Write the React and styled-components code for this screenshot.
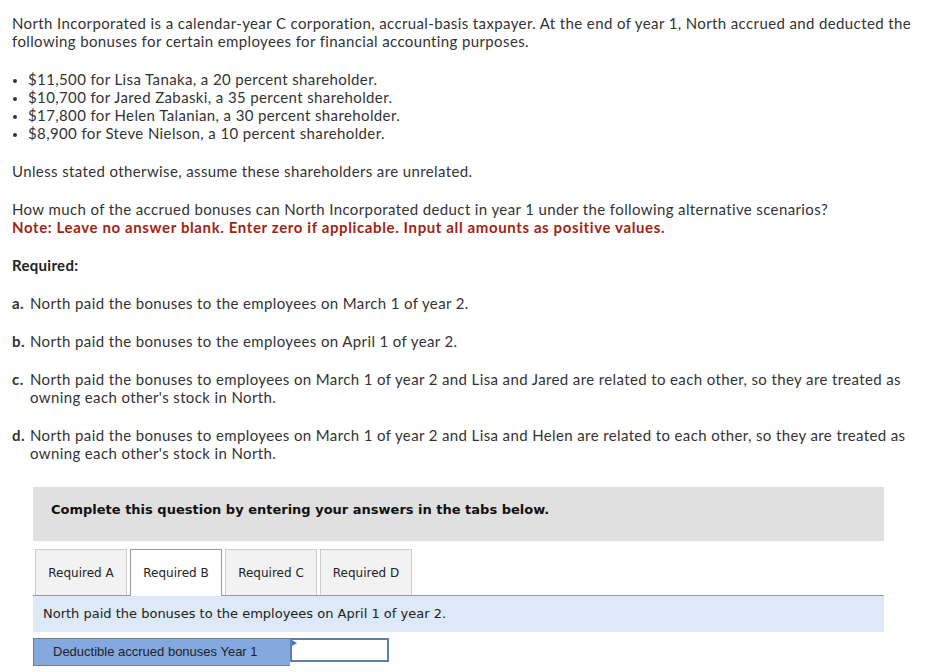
import styled, { createGlobalStyle } from 'styled-components'

const GlobalStyle = createGlobalStyle`
  body {
    margin: 0;
    background: #fff;
    color: #333;
    font-family: Lato, "Open Sans", sans-serif;
  }
`

const bonuses = [
  '$11,500 for Lisa Tanaka, a 20 percent shareholder.',
  '$10,700 for Jared Zabaski, a 35 percent shareholder.',
  '$17,800 for Helen Talanian, a 30 percent shareholder.',
  '$8,900 for Steve Nielson, a 10 percent shareholder.',
]

const parts = [
  { key: 'a', text: 'North paid the bonuses to the employees on March 1 of year 2.' },
  { key: 'b', text: 'North paid the bonuses to the employees on April 1 of year 2.' },
  { key: 'c', text: "North paid the bonuses to employees on March 1 of year 2 and Lisa and Jared are related to each other, so they are treated as owning each other's stock in North." },
  { key: 'd', text: "North paid the bonuses to employees on March 1 of year 2 and Lisa and Helen are related to each other, so they are treated as owning each other's stock in North." },
]

const tabs = ['Required A', 'Required B', 'Required C', 'Required D']

const App = () => {
  const active = 1
  return (
    <>
      <GlobalStyle />
      <Page>
        <Para>
          North Incorporated is a calendar-year C corporation, accrual-basis taxpayer. At the end of year 1, North accrued and deducted the following bonuses for certain employees for financial accounting purposes.
        </Para>
        <Bullets>
          {bonuses.map(b => <li key={b}>{b}</li>)}
        </Bullets>
        <Para>Unless stated otherwise, assume these shareholders are unrelated.</Para>
        <Para>
          How much of the accrued bonuses can North Incorporated deduct in year 1 under the following alternative scenarios?
          <br />
          <Note>Note: Leave no answer blank. Enter zero if applicable. Input all amounts as positive values.</Note>
        </Para>
        <Para><strong>Required:</strong></Para>
        {parts.map(p => (
          <Part key={p.key}>
            <b>{p.key}.</b>
            <span>{p.text}</span>
          </Part>
        ))}

        <Panel>
          <Banner>Complete this question by entering your answers in the tabs below.</Banner>
          <TabRow>
            {tabs.map((t, i) => (
              <Tab key={t} $active={i === active}>{t}</Tab>
            ))}
          </TabRow>
          <Prompt>North paid the bonuses to the employees on April 1 of year 2.</Prompt>
          <AnswerRow>
            <AnswerLabel>Deductible accrued bonuses Year 1</AnswerLabel>
            <AnswerInput />
          </AnswerRow>
        </Panel>
      </Page>
    </>
  )
}

export default App

const Page = styled.div`
  padding: 14px 12px 0 12px;
  font-size: 15px;
  line-height: 18px;
  letter-spacing: 0.38px;
`

const Para = styled.p`
  margin: 0 0 20px 0;

  strong {
    font-weight: 700;
    color: #222;
    letter-spacing: 0.3px;
  }
`

const Note = styled.span`
  color: #a61e12;
  font-weight: 700;
  letter-spacing: 0.62px;
`

const Bullets = styled.ul`
  margin: 20px 0 20px 0;
  padding-left: 16px;

  li::marker {
    font-size: 12px;
  }
`

const Part = styled.p`
  display: flex;
  margin: 0 0 20px 0;

  b {
    font-weight: 700;
    width: 18px;
    flex-shrink: 0;
  }
`

const Panel = styled.div`
  margin: 25px 38px 0 21px;
  letter-spacing: normal;
`

const Banner = styled.div`
  background: #e0e0e0;
  padding: 14px 18px 22px;
  font-family: "DejaVu Sans", Verdana, sans-serif;
  font-size: 13px;
  font-weight: 700;
  color: #111;
`

const TabRow = styled.div`
  display: flex;
  gap: 3px;
  margin-top: 8px;
  padding-left: 2px;
  border-bottom: 1px solid #999;
`

const Tab = styled.div`
  width: 92px;
  box-sizing: border-box;
  display: flex;
  align-items: center;
  justify-content: center;
  font-family: "DejaVu Sans", Verdana, sans-serif;
  font-size: 12px;
  color: #222;
  border: 1px solid ${p => (p.$active ? '#999' : '#ccc')};
  border-bottom: none;
  background: ${p => (p.$active ? '#fff' : '#f2f2f2')};
  margin-bottom: ${p => (p.$active ? '-1px' : '0')};
  height: ${p => (p.$active ? '47px' : '46px')};
`

const Prompt = styled.div`
  background: #dde9f6;
  padding: 9px 10px;
  font-family: "DejaVu Sans", Verdana, sans-serif;
  font-size: 13px;
  color: #222;
`

const AnswerRow = styled.div`
  display: flex;
  margin-top: 6px;
`

const AnswerLabel = styled.div`
  width: 257px;
  box-sizing: border-box;
  background: #84a9e0;
  border: 1px solid #7a7a7a;
  border-right: none;
  padding: 4px 19px;
  font-family: "Liberation Sans", Arial, sans-serif;
  font-size: 13px;
  color: #222;
`

const AnswerInput = styled.div`
  width: 99px;
  height: 24px;
  box-sizing: border-box;
  background: #fff;
  border: 2px solid #5f7fab;
  position: relative;

  &::before {
    content: '';
    position: absolute;
    left: 0;
    top: 0;
    border-top: 3px solid transparent;
    border-bottom: 3px solid transparent;
    border-left: 5px solid #4a79c4;
  }
`
